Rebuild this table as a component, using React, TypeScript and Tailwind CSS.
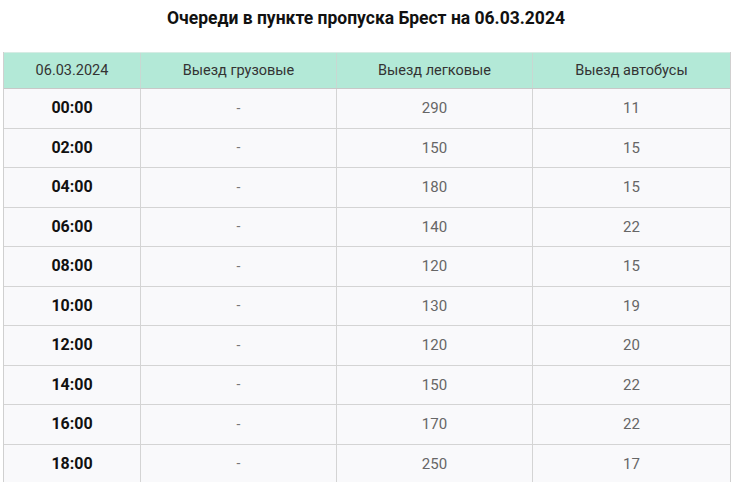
const rows = [
  ["00:00", "-", "290", "11"],
  ["02:00", "-", "150", "15"],
  ["04:00", "-", "180", "15"],
  ["06:00", "-", "140", "22"],
  ["08:00", "-", "120", "15"],
  ["10:00", "-", "130", "19"],
  ["12:00", "-", "120", "20"],
  ["14:00", "-", "150", "22"],
  ["16:00", "-", "170", "22"],
  ["18:00", "-", "250", "17"],
];

const headers = ["06.03.2024", "Выезд грузовые", "Выезд легковые", "Выезд автобусы"];

export default function App() {
  return (
    <div className="w-[732px] h-[482px] overflow-hidden bg-white font-['Roboto',sans-serif]">
      <h1 className="h-[36px] flex items-center justify-center text-[17.5px] font-bold text-[#111]">
        Очереди в пункте пропуска Брест на 06.03.2024
      </h1>
      <div className="mt-[16px] ml-[3px] w-[728px] border-l border-r border-[#d0d0d0]">
        <div className="grid grid-cols-[137px_196px_196px_1fr] h-[37px] bg-[#b3e9d7] border-t border-[#d6ece4] border-b border-b-[#c8c8c8]">
          {headers.map((h, i) => (
            <div
              key={h}
              className={`flex items-center justify-center text-[14.5px] text-[#333] ${i < 3 ? "border-r border-[#c8d8d2]" : ""}`}
            >
              {h}
            </div>
          ))}
        </div>
        {rows.map((r) => (
          <div
            key={r[0]}
            className="grid grid-cols-[137px_196px_196px_1fr] h-[39.5px] bg-[#f9f9fb] border-b border-[#d4d4d4]"
          >
            <div className="flex items-center justify-center border-r border-[#d4d4d4] text-[16px] font-bold text-[#111]">
              {r[0]}
            </div>
            <div className="flex items-center justify-center border-r border-[#d4d4d4] text-[14px] text-[#777]">
              {r[1]}
            </div>
            <div className="flex items-center justify-center border-r border-[#d4d4d4] text-[15px] text-[#666]">
              {r[2]}
            </div>
            <div className="flex items-center justify-center text-[15px] text-[#666]">
              {r[3]}
            </div>
          </div>
        ))}
      </div>
    </div>
  );
}
